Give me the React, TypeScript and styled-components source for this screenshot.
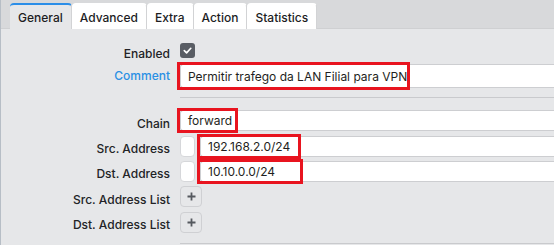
import styled, { createGlobalStyle } from 'styled-components';

const GlobalStyle = createGlobalStyle`
  html, body {
    margin: 0;
    padding: 0;
    background: #e6e7e9;
    font-family: Inter, "Noto Sans", sans-serif;
    overflow: hidden;
  }
`;

const tabs = ['General', 'Advanced', 'Extra', 'Action', 'Statistics'];

const Page = styled.div`
  width: 554px;
  height: 245px;
  border-left: 1px solid #b7bec6;
  box-sizing: border-box;
  display: flex;
  flex-direction: column;
`;

const TabBar = styled.div`
  display: flex;
  align-items: flex-end;
  height: 29px;
  padding-left: 9px;
  background: #d8d9db;
  border-bottom: 1px solid #cfd0d2;
  box-sizing: border-box;
`;

const Tab = styled.div<{ $active?: boolean }>`
  height: 26px;
  padding: 0 8px;
  display: flex;
  align-items: center;
  box-sizing: border-box;
  font-size: 12px;
  font-weight: 500;
  color: #1d1d1f;
  background: ${p => (p.$active ? '#e6e7e9' : '#ffffff')};
  border-top: 2px solid ${p => (p.$active ? '#2b8ee8' : '#ffffff')};
  border-right: 1px solid #d2d3d5;
  border-radius: 4px 4px 0 0;
  margin-bottom: -1px;
`;

const Form = styled.div`
  display: grid;
  grid-template-columns: 169px 1fr;
  column-gap: 10px;
  align-items: center;
  padding-top: 13px;
`;

const Label = styled.div<{ $link?: boolean; $h?: number }>`
  text-align: right;
  font-size: 12px;
  font-weight: 500;
  color: ${p => (p.$link ? '#2a90e4' : '#222326')};
  height: ${p => p.$h ?? 21}px;
  line-height: ${p => p.$h ?? 21}px;
  white-space: nowrap;
`;

const Field = styled.div<{ $h?: number; $mb?: number }>`
  display: flex;
  align-items: center;
  gap: 5px;
  height: ${p => p.$h ?? 21}px;
  margin-bottom: ${p => p.$mb ?? 4}px;
`;

const Check = styled.div`
  width: 15px;
  height: 15px;
  border-radius: 3px;
  background: #595d64;
  display: flex;
  align-items: center;
  justify-content: center;
`;

const Input = styled.div`
  position: relative;
  flex: 1;
  height: 100%;
  background: #fff;
  border: 1px solid #cdced1;
  border-right: none;
  border-radius: 3px 0 0 3px;
  box-sizing: border-box;
  display: flex;
  align-items: center;
  padding-left: 7px;
  font-size: 12px;
  color: #1f1f22;
`;

const Highlight = styled.div<{ $w: number }>`
  position: absolute;
  left: -4px;
  top: -3px;
  bottom: -3px;
  width: ${p => p.$w}px;
  border: 3px solid #e8141f;
  box-sizing: border-box;
  pointer-events: none;
`;

const SmallBox = styled.div`
  width: 15px;
  height: 100%;
  background: #fff;
  border: 1px solid #d6d7da;
  border-radius: 4px;
  box-sizing: border-box;
`;

const PlusButton = styled.div`
  width: 22px;
  height: 21px;
  border: 1px solid #cfd0d3;
  border-radius: 4px;
  box-sizing: border-box;
  display: flex;
  align-items: center;
  justify-content: center;
`;

const Separator = styled.div<{ $mt: number; $mb: number }>`
  grid-column: 2;
  height: 1px;
  background: #c9cacd;
  margin: ${p => p.$mt}px 0 ${p => p.$mb}px;
`;

const Plus = () => (
  <svg width="9" height="9" viewBox="0 0 9 9">
    <path d="M4.5 0.5 V8.5 M0.5 4.5 H8.5" stroke="#55595f" strokeWidth="1.8" />
  </svg>
);

export default function App() {
  return (
    <>
      <GlobalStyle />
      <Page>
        <TabBar>
          {tabs.map((t, i) => (
            <Tab key={t} $active={i === 0}>
              {t}
            </Tab>
          ))}
        </TabBar>
        <Form>
          <Label $h={17}>Enabled</Label>
          <Field $h={17} $mb={5}>
            <Check>
              <svg width="11" height="11" viewBox="0 0 12 12">
                <path d="M2.5 6.2 L5 8.6 L9.6 3.6" fill="none" stroke="#fff" strokeWidth="1.8" strokeLinecap="round" strokeLinejoin="round" />
              </svg>
            </Check>
          </Field>

          <Label $link $h={24}>Comment</Label>
          <Field $h={24} $mb={0}>
            <Input>
              Permitir trafego da LAN Filial para VPN
              <Highlight $w={233} />
            </Input>
          </Field>

          <Separator $mt={9} $mb={12} />

          <Label>Chain</Label>
          <Field $mb={5}>
            <Input>
              forward
              <Highlight $w={61} />
            </Input>
          </Field>

          <Label>Src. Address</Label>
          <Field>
            <SmallBox />
            <Input>
              192.168.2.0/24
              <Highlight $w={104} />
            </Input>
          </Field>

          <Label>Dst. Address</Label>
          <Field>
            <SmallBox />
            <Input>
              10.10.0.0/24
              <Highlight $w={106} />
            </Input>
          </Field>

          <Label>Src. Address List</Label>
          <Field $mb={5}>
            <PlusButton>
              <Plus />
            </PlusButton>
          </Field>

          <Label>Dst. Address List</Label>
          <Field>
            <PlusButton>
              <Plus />
            </PlusButton>
          </Field>

          <Separator $mt={6} $mb={0} />
        </Form>
      </Page>
    </>
  );
}
